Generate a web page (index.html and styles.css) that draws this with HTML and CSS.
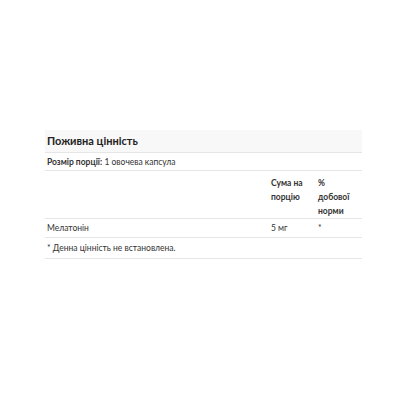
FILE: index.html
```html
<!DOCTYPE html>
<html>
<head>
<meta charset="utf-8">
<link rel="stylesheet" href="styles.css">
</head>
<body>
<div class="page">
  <table class="facts">
    <colgroup><col class="c-name"><col class="c-amt"><col class="c-dv"></colgroup>
    <tr class="title-row"><th colspan="3">Поживна цінність</th></tr>
    <tr class="serving"><td colspan="3"><b>Розмір порції:</b> 1 овочева капсула</td></tr>
    <tr class="head"><td></td><td>Сума на порцію</td><td>%<br>добової<br>норми</td></tr>
    <tr class="item"><td>Мелатонін</td><td>5 мг</td><td>*</td></tr>
    <tr class="note"><td colspan="3">* Денна цінність не встановлена.</td></tr>
  </table>
</div>
</body>
</html>
```
FILE: styles.css
```css
html, body { margin: 0; padding: 0; background: #fff; }
.page { padding: 130px 38px 0 45px; font-family: Lato, "Open Sans", sans-serif; color: #333; }
.facts { width: 317px; table-layout: fixed; border-collapse: collapse; font-size: 8.5px; line-height: 14px; }
.c-name { width: 223px; }
.c-amt { width: 47px; }
.c-dv { width: 47px; }
.facts td, .facts th { padding: 0 2px 0 3px; border-bottom: 1px solid #e6e6e6; text-align: left; vertical-align: top; }
.title-row th { background: #f8f8f8; font-size: 11px; font-weight: 700; color: #222; height: 22px; vertical-align: middle; padding-left: 2px; }
.serving td { height: 17px; vertical-align: middle; padding-left: 2px; }
.serving b { font-weight: 700; }
.head td { padding-top: 5px; padding-bottom: 0; font-weight: 700; }
.item td { height: 18px; vertical-align: middle; }
.item td:first-child, .note td { padding-left: 2px; }
.note td { height: 20px; vertical-align: middle; }
```
